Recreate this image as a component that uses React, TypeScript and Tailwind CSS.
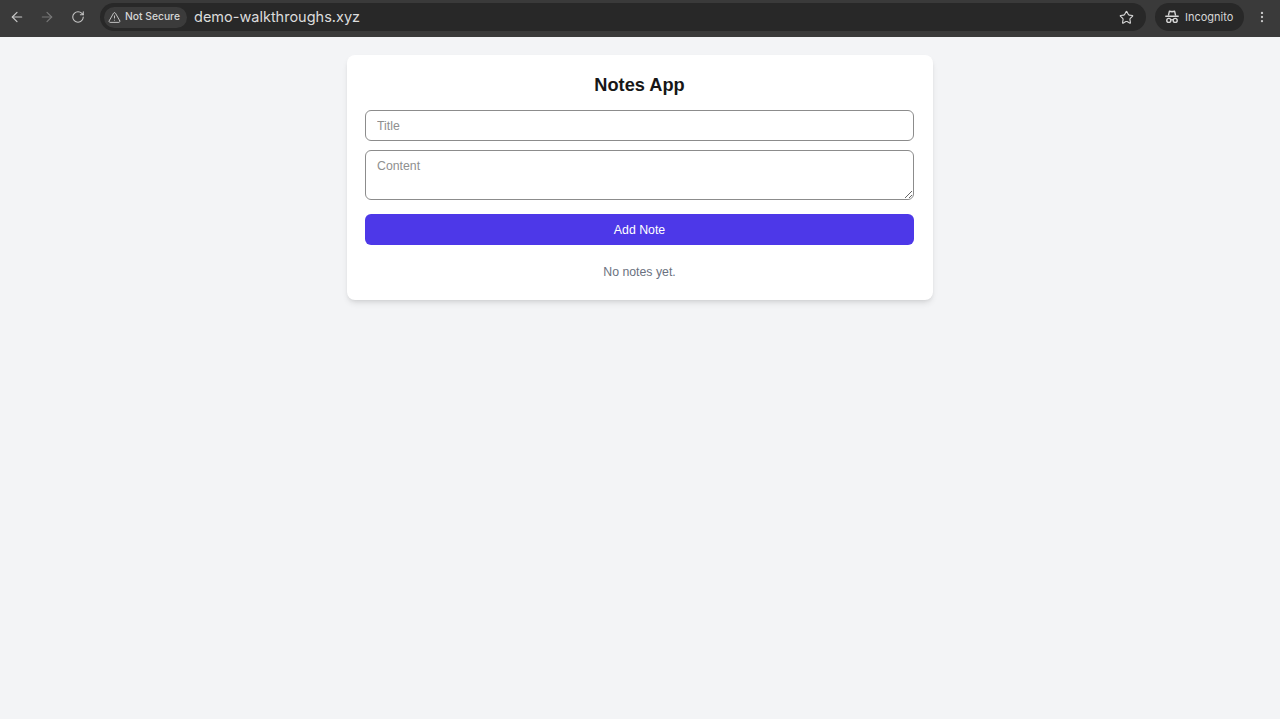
import React from 'react';
import { ArrowLeft, ArrowRight, RotateCw, TriangleAlert, Star, EllipsisVertical } from 'lucide-react';

function IncognitoIcon() {
    return (
        <svg width="14" height="14" viewBox="0 0 14 14" fill="none" stroke="currentColor" strokeWidth="1.4">
            <path d="M3.4 5.6 L4.3 1.6 Q4.5 1 5.1 1.2 L7 1.7 L8.9 1.2 Q9.5 1 9.7 1.6 L10.6 5.6" strokeLinejoin="round" />
            <path d="M0.8 6.3 H13.2" strokeLinecap="round" />
            <circle cx="3.8" cy="10.4" r="2" />
            <circle cx="10.2" cy="10.4" r="2" />
            <path d="M5.8 10 Q7 9.2 8.2 10" />
        </svg>
    );
}

export default function App() {
    return (
        <div className="min-h-[719px] bg-[#f3f4f6] font-['Liberation_Sans',Arial,sans-serif]">
            {/* Browser toolbar */}
            <div className="h-[37px] bg-[#3a3a3a] flex items-center pb-[3px] pl-[9px] pr-[9px]">
                <div className="flex items-center w-[91px]">
                    <ArrowLeft size={16} strokeWidth={1.8} className="text-[#c7c7c7]" />
                    <ArrowRight size={16} strokeWidth={1.8} className="ml-[14px] text-[#777777]" />
                    <RotateCw size={14} strokeWidth={1.8} className="ml-[16px] text-[#c7c7c7]" />
                </div>
                <div className="w-[1046px] h-[28px] rounded-full bg-[#282828] flex items-center pl-[4px] pr-[12px]">
                    <div className="w-[83px] h-[21px] rounded-full bg-[#3b3b3b] flex items-center pl-[4px] gap-[4px] text-[#d6d6d6]">
                        <TriangleAlert size={13} strokeWidth={1.6} />
                        <span className="text-[10.3px] font-['Inter',sans-serif] font-medium whitespace-nowrap">Not Secure</span>
                    </div>
                    <span className="ml-[7px] text-[14.5px] font-['Inter',sans-serif] text-[#dcdcdc]">demo-walkthroughs.xyz</span>
                    <Star size={15} strokeWidth={1.8} className="ml-auto text-[#d6d6d6]" />
                </div>
                <div className="ml-[9px] w-[89px] h-[28px] rounded-full bg-[#282828] flex items-center pl-[10px] gap-[6px] text-[#d6d6d6]">
                    <IncognitoIcon />
                    <span className="text-[11px] font-['Inter',sans-serif]">Incognito</span>
                </div>
                <EllipsisVertical size={14} strokeWidth={2} className="ml-[11px] text-[#c7c7c7]" />
            </div>

            {/* Notes card */}
            <div className="mx-auto mt-[18px] w-[586px] h-[245px] bg-white rounded-lg shadow-md pt-[18px] pl-[18px] pr-[19px]">
                <h1 className="text-[18.2px] leading-[24px] font-bold text-[#171717] text-center">Notes App</h1>
                <input
                    placeholder="Title"
                    className="mt-[13px] block w-full h-[31px] px-[11px] text-[12.3px] border border-[#8c8c8c] rounded-md placeholder:text-[#8f8f8f] outline-none"
                />
                <textarea
                    placeholder="Content"
                    className="mt-[9px] block w-full h-[50px] px-[11px] pt-[7px] text-[12.3px] leading-[16px] border border-[#8c8c8c] rounded-md placeholder:text-[#8f8f8f] outline-none"
                />
                <button className="mt-[14px] block w-full h-[31px] pt-[1px] bg-[#4d38e8] text-white text-[12.3px] rounded-md">Add Note</button>
                <p className="mt-[18px] text-center text-[12.3px] leading-[18px] text-[#6b7280]">No notes yet.</p>
            </div>
        </div>
    );
}
